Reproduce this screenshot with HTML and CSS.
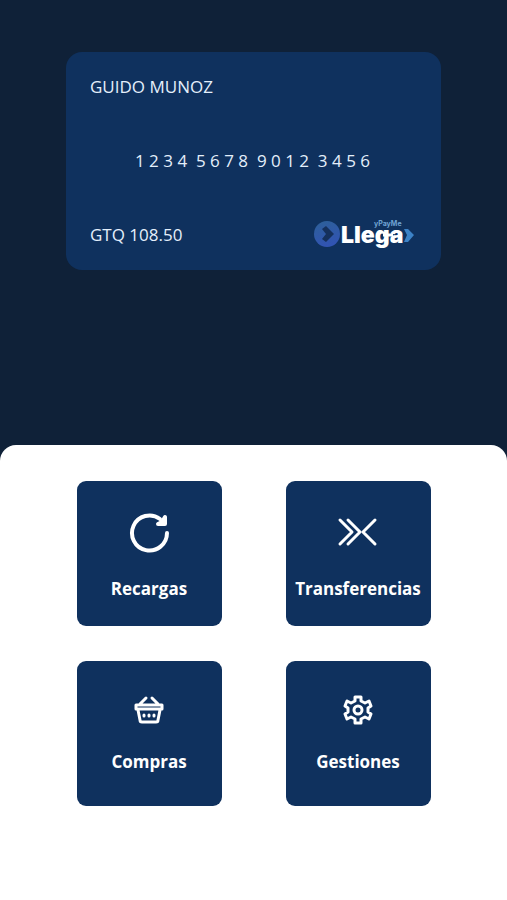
FILE: index.html
```
<!DOCTYPE html>
<html lang="es">
<head>
<meta charset="utf-8">
<meta name="viewport" content="width=device-width, initial-scale=1">
<title>Llega</title>
<link rel="stylesheet" href="styles.css">
</head>
<body>
<header class="hero">
  <section class="card">
    <p class="card-name">GUIDO MUNOZ</p>
    <p class="card-number">1 2 3 4  5 6 7 8  9 0 1 2  3 4 5 6</p>
    <div class="card-footer">
      <p class="card-balance">GTQ 108.50</p>
      <svg class="logo" viewBox="0 0 102 32" role="img" aria-label="Llega yPayMe">
        <defs>
          <linearGradient id="disc" x1="0" y1="0" x2="0.3" y2="1">
            <stop offset="0" stop-color="#2d6098"/>
            <stop offset="1" stop-color="#3154b2"/>
          </linearGradient>
        </defs>
        <circle cx="14" cy="15" r="13" fill="url(#disc)"/>
        <path d="M9 10l4-3 8 8-8 8-4-3 4-5z" fill="#15305c"/>
        <text class="logo-word" x="28" y="24">Llega</text>
        <path d="M70 16h10" stroke="#fff" stroke-width="3"/>
        <text class="logo-tag" x="61" y="7">yPayMe</text>
        <path d="M91 10h4l6 6-6 7h-4l3-7z" fill="#3c82c6"/>
      </svg>
    </div>
  </section>
</header>
<main class="sheet">
  <nav class="actions" aria-label="Acciones">
    <button class="tile" type="button">
      <svg class="icon" viewBox="0 0 56 55" aria-hidden="true">
        <path d="M46 27A17.500 17.500 0 1 1 39 13"/>
        <path d="M44 11v7h-7l4-2z"/>
      </svg>
      <span class="label">Recargas</span>
    </button>
    <button class="tile" type="button">
      <svg class="icon icon-thin" viewBox="0 0 56 55" aria-hidden="true">
        <path d="M10 14l12 12L10 38M18 14l12 12-12 12M45 14L33 26l12 12"/>
      </svg>
      <span class="label">Transferencias</span>
    </button>
    <button class="tile" type="button">
      <svg class="icon icon-small" viewBox="0 0 48 48" aria-hidden="true">
        <path d="M11 19h26v4H11zM13 24l2 10q0 2 2 2h14q2 0 2-2l2-10M15 18l6-6M33 18l-6-6"/>
        <path d="M19 29v1M24 29v1M29 29v1"/>
      </svg>
      <span class="label">Compras</span>
    </button>
    <button class="tile" type="button">
      <svg class="icon icon-small" viewBox="0 0 48 48" aria-hidden="true">
        <path d="M21 11h6v4l4 2 4-2 2 5-3 2v4l3 2-2 5-4-2-4 2v4h-6v-4l-4-2-4 2-2-5 3-2v-4l-3-2 2-5 4 2 4-2z"/>
        <circle cx="24" cy="24" r="4"/>
      </svg>
      <span class="label">Gestiones</span>
    </button>
  </nav>
</main>
</body>
</html>
```
FILE: styles.css
```
* {
  box-sizing: border-box;
}

body {
  margin: 0;
  min-height: 100vh;
  display: flex;
  flex-direction: column;
  background: #0f2138;
  color: #e4effb;
  font-family: "Open Sans", "Noto Sans", sans-serif;
  font-size: 17px;
  line-height: 24px;
}

p {
  margin: 0;
}

.hero {
  padding: 52px 66px 175px;
}

.card {
  display: flex;
  flex-direction: column;
  gap: 50px;
  padding: 23px 26px 23px 24px;
  border-radius: 16px;
  background: #0f315e;
}

.card-number {
  text-align: center;
  white-space: pre;
}

.card-footer {
  display: flex;
  align-items: center;
  justify-content: space-between;
  height: 24px;
}

.logo {
  width: 102px;
  height: 32px;
}

.logo-word {
  font: 900 23px Inter, sans-serif;
  fill: #fff;
}

.logo-tag {
  font: 700 7px Inter, sans-serif;
  fill: #6fa3d3;
}

.sheet {
  flex: 1;
  padding: 36px 24px;
  border-radius: 16px 16px 0 0;
  background: #fff;
}

.actions {
  display: grid;
  grid-template-columns: repeat(2, 145px);
  justify-content: center;
  gap: 35px 64px;
}

.tile {
  display: flex;
  flex-direction: column;
  align-items: center;
  gap: 16px;
  height: 145px;
  padding: 25px 0 0;
  border: 0;
  border-radius: 9px;
  background: #0f315e;
  color: #fff;
  font: inherit;
  font-weight: 700;
  cursor: pointer;
}

.icon {
  width: 56px;
  height: 55px;
  fill: none;
  stroke: #fff;
  stroke-width: 4;
  stroke-linecap: round;
  stroke-linejoin: round;
}

.icon-thin,
.icon-small {
  stroke-width: 3;
}

.icon-small {
  width: 48px;
  height: 48px;
}
```
